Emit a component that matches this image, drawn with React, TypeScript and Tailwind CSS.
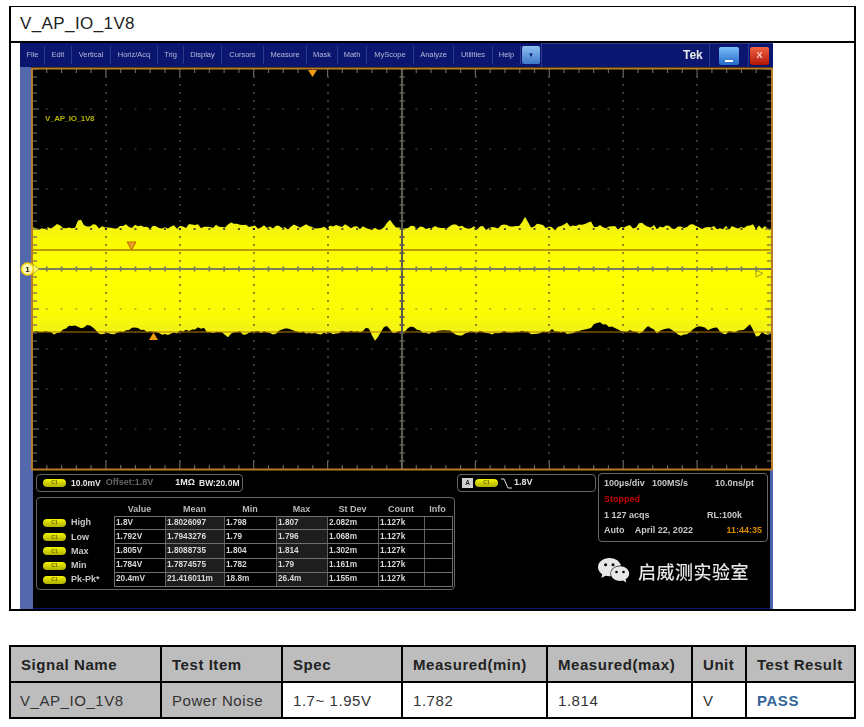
import React from "react";

const menu: [string, string][] = [
  ["File", "w-[24px]"],
  ["Edit", "w-[27px]"],
  ["Vertical", "w-[39px]"],
  ["Horiz/Acq", "w-[47px]"],
  ["Trig", "w-[26px]"],
  ["Display", "w-[38px]"],
  ["Cursors", "w-[42px]"],
  ["Measure", "w-[43px]"],
  ["Mask", "w-[31px]"],
  ["Math", "w-[29px]"],
  ["MyScope", "w-[47px]"],
  ["Analyze", "w-[40px]"],
  ["Utilities", "w-[39px]"],
  ["Help", "w-[28px]"],
];

const rows = [
  ["High", "1.8V", "1.8026097", "1.798", "1.807", "2.082m", "1.127k", ""],
  ["Low", "1.792V", "1.7943276", "1.79", "1.796", "1.068m", "1.127k", ""],
  ["Max", "1.805V", "1.8088735", "1.804", "1.814", "1.302m", "1.127k", ""],
  ["Min", "1.784V", "1.7874575", "1.782", "1.79", "1.161m", "1.127k", ""],
  ["Pk-Pk*", "20.4mV", "21.416011m", "18.8m", "26.4m", "1.155m", "1.127k", ""],
];

function gauss(x: number, c: number, w: number) {
  return Math.exp(-((x - c) * (x - c)) / (2 * w * w));
}
function noise(x: number, s: number) {
  const v = Math.sin(x * 12.9898 + s) * 43758.5453;
  return v - Math.floor(v);
}

const topSpikes: [number, number, number][] = [
  [80, 8, 2.5], [55, 3, 3], [193, 3, 3], [232, 3, 4], [390, 7, 2.5], [525, 10, 2.5], [566, 5, 2.5], [590, 5, 2.5], [640, 3, 3], [696, 3, 3],
];
const bites: [number, number, number][] = [
  [73, 6, 6], [88, 6, 4], [135, 4, 5], [197, 4, 7], [288, 4, 5], [367, 6, 3], [387, 9, 3], [412, 6, 5], [445, 4, 4],
  [552, 5, 3], [602, 8, 12], [648, 6, 3], [668, 5, 6], [702, 7, 6], [717, 4, 3], [750, 7, 3],
];
const downs: [number, number, number][] = [
  [227, 4, 3], [375, 7, 2.5], [680, 3, 6], [757, 7, 2.5], [460, 2, 3], [640, 1, 3], [111, 2, 2],
];

const pts: string[] = [];
const bottom: string[] = [];
for (let x = 33; x <= 771; x += 3) {
  let t = 230.5 - noise(Math.floor(x / 3), 1) * 4.5 - noise(Math.floor(x / 14), 2) * 2.5;
  for (const [c, a, w] of topSpikes) t -= a * gauss(x, c, w);
  pts.push(`${x},${t.toFixed(1)}`);
  let b = 333 + noise(Math.floor(x / 3), 3) * 2 - noise(Math.floor(x / 9), 4) * 3;
  for (const [c, a, w] of bites) b -= a * gauss(x, c, w);
  for (const [c, a, w] of downs) b += a * gauss(x, c, w);
  bottom.unshift(`${x},${b.toFixed(1)}`);
}
const wave = [...pts, ...bottom].join(" ");

const vx = [106, 180, 254, 328, 402, 476, 549, 623, 697];
const hy = [109, 149, 189, 229, 269, 309, 349, 389, 429];
const fine = Array.from({ length: 50 }, (_, i) => 32 + i * 14.78);
const fineY = Array.from({ length: 50 }, (_, i) => 69 + i * 8);

function Plot() {
  return (
    <svg
      width="742"
      height="403"
      viewBox="31 67 742 403"
      className="block shrink-0 overflow-visible"
    >
      <defs>
        <linearGradient id="wg" x1="0" y1="0" x2="0" y2="1">
          <stop offset="0" stopColor="#eeee18" />
          <stop offset="0.2" stopColor="#fafa04" />
          <stop offset="0.5" stopColor="#ffff00" />
          <stop offset="0.8" stopColor="#fafa06" />
          <stop offset="1" stopColor="#ecec20" />
        </linearGradient>
      </defs>
      <rect x="31" y="67" width="742" height="403" fill="#000" />
      <polygon points={wave} fill="url(#wg)" />
      {vx.map((x) =>
        fineY.map((y) => {
          const onWave = y > 230 && y < 328;
          if (x === 402) return null;
          return (
            <rect key={`${x}-${y}`} x={x - 1} y={y - 1} width="2" height="2" fill={onWave ? "#8a8a20" : "#383838"} />
          );
        })
      )}
      {hy.map((y) =>
        fine.map((x) => {
          if (y === 269) return null;
          const onWave = y > 230 && y < 328;
          return (
            <rect key={`${x}-${y}`} x={x - 1} y={y - 0.8} width="2" height="1.6" fill={onWave ? "#b0b020" : "#2e2e2e"} />
          );
        })
      )}
      <line x1="33" x2="771" y1="250" y2="250" stroke="#a87c00" strokeWidth="1.4" />
      <line x1="33" x2="771" y1="332" y2="332" stroke="#b87a00" strokeWidth="1" />
      <line x1="33" x2="771" y1="269" y2="269" stroke="#7c7c58" strokeWidth="2" />
      <line x1="402" x2="402" y1="69" y2="469" stroke="#5c5c4c" strokeWidth="2" />
      {fine.map((x) => (
        <line key={`c${x}`} x1={x} x2={x} y1="266.5" y2="271.5" stroke="#7c7c58" strokeWidth="1.8" />
      ))}
      {fineY.map((y) => (
        <line key={`d${y}`} x1="399.5" x2="404.5" y1={y} y2={y} stroke="#5c5c4c" strokeWidth="1.8" />
      ))}
      {fine.map((x, i) => (
        <g key={`e${x}`}>
          <line x1={x} x2={x} y1="69" y2={i % 5 === 0 ? 77 : 73} stroke="#66665a" strokeWidth="1.2" />
          <line x1={x} x2={x} y1="469" y2={i % 5 === 0 ? 461 : 465} stroke="#66665a" strokeWidth="1.2" />
        </g>
      ))}
      {fineY.map((y, i) => (
        <g key={`f${y}`}>
          <line x1="33" x2={i % 5 === 0 ? 39 : 37} y1={y} y2={y} stroke="#66665a" strokeWidth="1.2" />
          <line x1="771" x2={i % 5 === 0 ? 765 : 767} y1={y} y2={y} stroke="#66665a" strokeWidth="1.2" />
        </g>
      ))}
      <rect x="32" y="68.5" width="740" height="401" fill="none" stroke="#b87c28" strokeWidth="2" />
      <polygon points="308,70 317,70 312.5,77" fill="#f09a10" />
      <polygon points="127,242 136,242 131.5,250" fill="#e8a020" stroke="#c06c00" strokeWidth="1" />
      <polygon points="149,340 158,340 153.5,332.5" fill="#f09a10" />
      <polygon points="756,270 763,273.5 756,277" fill="none" stroke="#9a9a30" strokeWidth="1" />
      <polygon points="33,264 39,269 33,274" fill="#f8f880" stroke="#a0a020" strokeWidth="0.8" />
      <circle cx="27.5" cy="269" r="6" fill="#fbf7b0" stroke="#f4d400" strokeWidth="1.6" />
      <text x="27.5" y="272" textAnchor="middle" fontSize="8" fontWeight="700" fill="#222" fontFamily="Liberation Sans, sans-serif">1</text>
    </svg>
  );
}

function Pill() {
  return (
    <span className="flex h-[8px] w-[23px] shrink-0 items-center justify-center rounded-full bg-gradient-to-b from-[#f4f400] to-[#b0b000] text-[5px] font-bold text-[#6a6a00]">
      C1
    </span>
  );
}

function WeChat() {
  return (
    <svg width="33" height="28" viewBox="0 0 33 28" className="-ml-[1px] shrink-0">
      <path d="M12.5 1C6 1 1 5 1 10c0 3 1.6 5.4 4.2 7.2L4.4 21l4.2-2.2c1.2.3 2.5.5 3.9.5.5 0 1 0 1.4-.1-.3-1-.4-1.8-.4-2.6 0-4.6 4.2-8.2 9.6-8.2h.9C22.6 4 18 1 12.5 1z" fill="#e8e8e8" />
      <circle cx="8.6" cy="7.8" r="1.5" fill="#000" />
      <circle cx="16" cy="7.8" r="1.5" fill="#000" />
      <path d="M23 9.2c-5 0-9 3.2-9 7.4s4 7.4 9 7.4c1 0 2-.1 3-.4l3.4 2-.8-3.3c2.4-1.4 3.6-3.4 3.6-5.7 0-4.2-4.1-7.4-9.2-7.4z" fill="#e8e8e8" />
      <circle cx="19.5" cy="15" r="1.3" fill="#000" />
      <circle cx="26.5" cy="15" r="1.3" fill="#000" />
    </svg>
  );
}

function Scope() {
  return (
    <div className="ml-[9px] flex h-[566px] w-[753px] flex-col bg-black blur-[0.55px]">
      <div className="flex h-[24px] shrink-0 items-stretch bg-[#0b1670] text-[7.5px] text-[#b4bad8]">
        <div className="w-[1px] shrink-0" />
        {menu.map(([m, w]) => (
          <div key={m} className={`${w} my-[3px] flex shrink-0 items-center justify-center border-r border-[#2c3a8c]`}>
            {m}
          </div>
        ))}
        <div className="mx-[1px] my-[3px] flex w-[18px] shrink-0 items-center justify-center rounded-[2px] bg-gradient-to-b from-[#8fc0f0] to-[#3d78c8] text-[6px] text-[#0b1670]">
          ▼
        </div>
        <div className="flex flex-1 items-center border-l border-t border-[#2c3a8c]">
          <span className="ml-[141px] w-[26px] pb-[1px] text-[12px] font-bold text-[#e8e8e8]">Tek</span>
          <div className="flex h-full items-center border-x border-[#2c3a8c] px-[9px]">
            <div className="flex h-[18px] w-[20px] items-end justify-center rounded-[2px] bg-gradient-to-b from-[#7cc0f8] to-[#2468c8] pb-[3px]">
              <div className="h-[2px] w-[8px] bg-white" />
            </div>
          </div>
          <div className="ml-[1px] flex h-[18px] w-[19px] items-center justify-center rounded-[2px] bg-gradient-to-b from-[#f06040] to-[#b01000] text-[9px] font-bold text-[#f8d8d0]">
            X
          </div>
        </div>
      </div>

      <div className="relative flex h-[403px] shrink-0 bg-[#5468ad]">
        <div className="w-[11px] shrink-0" />
        <Plot />
        <span className="absolute left-[25px] top-[46px] text-[8px] font-bold tracking-[-0.3px] text-[#b4b400]">
          V_AP_IO_1V8
        </span>
      </div>

      <div className="flex min-h-0 flex-1 border-r-[3px] border-[#4a62b0] bg-black">
        <div className="w-[13px] shrink-0 bg-[#5468ad]" />
        <div className="flex-1 border-b border-[#0b1670] pl-[3px] pt-[2px] text-[8.25px] font-bold text-[#d8d8d8]">
          <div className="flex gap-[2px]">
            <div className="w-[419px] shrink-0 pt-[2px]">
              <div className="flex h-[18px] w-[207px] items-center rounded-[4px] border border-[#666] pl-[6px]">
                <Pill />
                <span className="ml-[5px] text-[8.5px] text-[#e8e8e8]">10.0mV</span>
                <span className="ml-[5px] text-[9px] text-[#666]">Offset:1.8V</span>
                <span className="ml-[22px] text-[9px] text-[#e8e8e8]">1MΩ</span>
                <span className="ml-[4px] text-[8.5px] text-[#e8e8e8]">BW:20.0M</span>
              </div>
              <div className="mt-[5px] h-[93px] rounded-[4px] border border-[#666] pl-[6px] pt-[5px]">
                <div className="ml-[71px] grid h-[13px] grid-cols-[51px_59px_52px_51px_51px_46px_27px] items-center text-center text-[9px] text-[#b8b8b8]">
                  <span>Value</span>
                  <span>Mean</span>
                  <span>Min</span>
                  <span>Max</span>
                  <span>St Dev</span>
                  <span>Count</span>
                  <span>Info</span>
                </div>
                {rows.map((r, i) => (
                  <div key={r[0]} className="flex h-[14.2px] items-center">
                    <Pill />
                    <span className="ml-[5px] w-[43px] text-[9px] text-[#c8c8c8]">{r[0]}</span>
                    <div className={`grid h-full w-[339px] grid-cols-[51px_59px_52px_51px_51px_46px_27px] border-x border-b border-[#707070] ${i === 0 ? "border-t" : ""}`}>
                      {r.slice(1).map((c, j) => (
                        <span
                          key={j}
                          className={`flex items-center overflow-hidden whitespace-nowrap border-r border-[#606060] pl-[1px] ${j === 1 || j === 3 ? "bg-[#1e1e1e]" : ""} ${j === 6 ? "border-r-0" : ""}`}
                        >
                          {c}
                        </span>
                      ))}
                    </div>
                  </div>
                ))}
              </div>
            </div>
            <div className="mt-[2px] flex h-[18px] w-[139px] shrink-0 items-center rounded-[4px] border border-[#666] pl-[4px]">
              <span className="mr-[2px] flex h-[10px] w-[11px] items-center justify-center bg-[#d0d0d0] text-[6.5px] text-[#222]">A</span>
              <Pill />
              <svg width="13" height="11" viewBox="0 0 13 11" className="ml-[2px] mr-[1px]">
                <path d="M1 1h3l4 9h4" fill="none" stroke="#e0e0e0" strokeWidth="1" />
              </svg>
              <span className="text-[9px] text-[#e0e0e0]">1.8V</span>
            </div>
            <div className="w-[170px] shrink-0 pt-[1px]">
              <div className="flex h-[69px] flex-col justify-between rounded-[4px] border border-[#666] px-[5px] py-[3px] text-[9px] text-[#c8c8c8]">
                <div className="flex h-[14px] items-center">
                  <span className="w-[48px]">100µs/div</span>
                  <span className="w-[63px]">100MS/s</span>
                  <span>10.0ns/pt</span>
                </div>
                <div className="flex h-[14px] items-center text-[#c00000]">Stopped</div>
                <div className="flex h-[14px] items-center">
                  <span className="w-[103px]">1 127 acqs</span>
                  <span>RL:100k</span>
                </div>
                <div className="flex h-[14px] items-center">
                  <span className="w-[31px]">Auto</span>
                  <span className="w-[92px]">April 22, 2022</span>
                  <span className="text-[#d88a00]">11:44:35</span>
                </div>
              </div>
              <div className="mt-[15px] flex items-center">
                <WeChat />
                <span className="ml-[8px] font-['Noto_Sans_CJK_SC',sans-serif] text-[18px] font-medium leading-[26px] tracking-[0.5px] text-[#e6e6e6]">
                  启威测实验室
                </span>
              </div>
            </div>
          </div>
        </div>
      </div>
    </div>
  );
}

const head = ["Signal Name", "Test Item", "Spec", "Measured(min)", "Measured(max)", "Unit", "Test Result"];

export default function App() {
  return (
    <div className="h-[727px] w-[864px] overflow-hidden bg-white pl-[9px] pt-[6px] font-['Liberation_Sans',Arial,sans-serif] text-[#222]">
      <div className="w-[847px] border-x-2 border-b-2 border-t border-black">
        <div className="flex h-[36px] items-center border-b-2 border-black pl-[9px] text-[17px] tracking-[0.4px]">
          V_AP_IO_1V8
        </div>
        <Scope />
      </div>
      <table className="mt-[34px] w-[845px] table-fixed border-collapse text-[15px] tracking-[0.55px]">
        <colgroup>
          <col className="w-[151px]" />
          <col className="w-[121px]" />
          <col className="w-[120px]" />
          <col className="w-[145px]" />
          <col className="w-[145px]" />
          <col className="w-[54px]" />
          <col className="w-[109px]" />
        </colgroup>
        <thead>
          <tr className="h-[36px] bg-[#bdbdbd]">
            {head.map((h) => (
              <th key={h} className="border-2 border-black pl-[10px] pt-[3px] text-left font-bold whitespace-nowrap">
                {h}
              </th>
            ))}
          </tr>
        </thead>
        <tbody>
          <tr className="h-[36px] text-[#333]">
            <td className="border-2 border-black bg-[#bdbdbd] pl-[9px] pt-[2px]">V_AP_IO_1V8</td>
            <td className="border-2 border-black bg-[#bdbdbd] pl-[10px] pt-[2px]">Power Noise</td>
            <td className="border-2 border-black pl-[10px] pt-[2px]">1.7~ 1.95V</td>
            <td className="border-2 border-black pl-[10px] pt-[2px]">1.782</td>
            <td className="border-2 border-black pl-[10px] pt-[2px]">1.814</td>
            <td className="border-2 border-black pl-[10px] pt-[2px]">V</td>
            <td className="border-2 border-black pl-[10px] pt-[2px] font-bold text-[#336699]">PASS</td>
          </tr>
        </tbody>
      </table>
    </div>
  );
}
